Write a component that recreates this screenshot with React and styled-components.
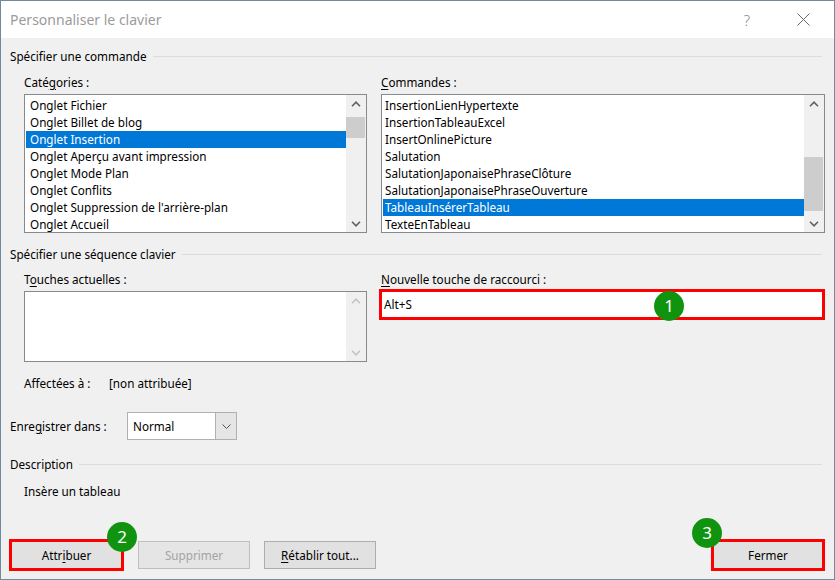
import React from 'react'
import styled, { createGlobalStyle } from 'styled-components'

const GlobalStyle = createGlobalStyle`
  html, body {
    margin: 0;
    padding: 0;
    background: #fff;
  }
  body {
    font-family: 'Noto Sans', 'Segoe UI', sans-serif;
    font-size: 11.7px;
    color: #000;
  }
`

const categories = [
  'Onglet Fichier',
  'Onglet Billet de blog',
  'Onglet Insertion',
  'Onglet Aperçu avant impression',
  'Onglet Mode Plan',
  'Onglet Conflits',
  "Onglet Suppression de l'arrière-plan",
  'Onglet Accueil',
]

const commands = [
  'InsertionLienHypertexte',
  'InsertionTableauExcel',
  'InsertOnlinePicture',
  'Salutation',
  'SalutationJaponaisePhraseClôture',
  'SalutationJaponaisePhraseOuverture',
  'TableauInsérerTableau',
  'TexteEnTableau',
]

const Chevron = ({ up, color }) => (
  <svg width='10' height='6' viewBox='0 0 10 6'>
    <path
      d={up ? 'M1 5.2 L5 1.2 L9 5.2' : 'M1 0.8 L5 4.8 L9 0.8'}
      fill='none'
      stroke={color}
      strokeWidth='1.6'
    />
  </svg>
)

const ListBox = ({ items, selected, thumb, height, indent }) => (
  <Box $height={height}>
    <Items>
      {items.map((item) => (
        <Item key={item} $selected={item === selected} $indent={indent}>
          {item}
        </Item>
      ))}
    </Items>
    <ScrollBar>
      <ScrollArrow>
        <Chevron up color={thumb ? '#606060' : '#c4c4c4'} />
      </ScrollArrow>
      <Track>{thumb && <Thumb $top={thumb.top} $height={thumb.height} />}</Track>
      <ScrollArrow>
        <Chevron color={thumb ? '#606060' : '#c4c4c4'} />
      </ScrollArrow>
    </ScrollBar>
  </Box>
)

const App = () => {
  return (
    <>
      <GlobalStyle />
      <Dialog>
        <TitleBar>
          <Title>Personnaliser le clavier</Title>
          <HelpButton>?</HelpButton>
          <CloseButton>
            <svg width='13' height='13' viewBox='0 0 13 13'>
              <path d='M0.5 0.5 L12.5 12.5 M12.5 0.5 L0.5 12.5' stroke='#6a6a6a' strokeWidth='1' />
            </svg>
          </CloseButton>
        </TitleBar>

        <Body>
          <SectionHeader>Spécifier une commande</SectionHeader>
          <Columns $top={10}>
            <Field>
              <Label>
                Caté<u>g</u>ories :
              </Label>
              <ListBox items={categories} selected='Onglet Insertion' thumb={{ top: 5, height: 21 }} />
            </Field>
            <Field>
              <Label>
                <u>C</u>ommandes :
              </Label>
              <ListBox
                items={commands}
                selected='TableauInsérerTableau'
                thumb={{ top: 45, height: 54 }}
                indent={2}
              />
            </Field>
          </Columns>

          <SectionHeader $top={13}>Spécifier une séquence clavier</SectionHeader>
          <Columns $top={9}>
            <Field>
              <Label>
                T<u>o</u>uches actuelles :
              </Label>
              <ListBox items={[]} height={71} />
            </Field>
            <Field>
              <Label>
                <u>N</u>ouvelle touche de raccourci :
              </Label>
              <KeyInput>
                Alt+S
                <Badge $left={272} $top={-1}>1</Badge>
              </KeyInput>
            </Field>
          </Columns>

          <AssignedRow>
            <AssignedLabel>Affectées à :</AssignedLabel>
            <span>[non attribuée]</span>
          </AssignedRow>

          <SaveRow>
            <SaveLabel>
              Enre<u>g</u>istrer dans :
            </SaveLabel>
            <Select>
              <SelectValue>Normal</SelectValue>
              <SelectButton>
                <svg width='9' height='5' viewBox='0 0 9 5'>
                  <path d='M0.5 0.5 L4.5 4.5 L8.5 0.5' fill='none' stroke='#555' strokeWidth='1' />
                </svg>
              </SelectButton>
            </Select>
          </SaveRow>

          <SectionHeader $top={16}>Description</SectionHeader>
          <DescriptionText>Insère un tableau</DescriptionText>

          <ButtonRow>
            <ButtonGroup>
              <Button $marked $width={115}>
                Attr<u>i</u>buer
                <Badge $left={95} $top={-20}>2</Badge>
              </Button>
              <Button disabled>Supprimer</Button>
              <Button>
                <u>R</u>établir tout...
              </Button>
            </ButtonGroup>
            <Button $marked $width={114}>
              Fermer
              <Badge $left={-22} $top={-24}>3</Badge>
            </Button>
          </ButtonRow>
        </Body>
      </Dialog>
    </>
  )
}

const Dialog = styled.div`
  width: 835px;
  height: 580px;
  box-sizing: border-box;
  border: 1px solid #6f8aa1;
  background: #f0f0f0;
  display: flex;
  flex-direction: column;
  overflow: hidden;
`

const TitleBar = styled.div`
  height: 37px;
  background: #fff;
  display: flex;
  align-items: center;
  padding: 0 8px 0 9px;
  flex-shrink: 0;
`

const Title = styled.div`
  flex: 1;
  font-size: 14px;
  color: #9b9b9b;
  padding-bottom: 1px;
`

const HelpButton = styled.div`
  width: 46px;
  margin-right: 10px;
  text-align: center;
  font-size: 15px;
  font-weight: 300;
  color: #8a8a8a;
`

const CloseButton = styled.div`
  width: 46px;
  display: flex;
  justify-content: center;
  align-items: center;
`

const Body = styled.div`
  flex: 1;
  display: flex;
  flex-direction: column;
  padding: 10px 9px 8px 9px;
`

const SectionHeader = styled.div`
  display: flex;
  align-items: center;
  height: 16px;
  line-height: 16px;
  margin-top: ${(p) => p.$top || 0}px;
  white-space: nowrap;
  &::after {
    content: '';
    flex: 1;
    height: 1px;
    background: #dcdcdc;
    margin-left: 6px;
    margin-right: 3px;
  }
`

const Columns = styled.div`
  display: grid;
  grid-template-columns: 343px 444px;
  column-gap: 14px;
  padding-left: 14px;
  margin-top: ${(p) => p.$top}px;
`

const Field = styled.div`
  display: flex;
  flex-direction: column;
`

const Label = styled.div`
  line-height: 16px;
  margin-bottom: 4px;
  white-space: nowrap;
  u {
    text-underline-offset: 2px;
  }
`

const Box = styled.div`
  height: ${(p) => p.$height || 139}px;
  box-sizing: border-box;
  border: 1px solid #858990;
  background: #fff;
  display: flex;
`

const Items = styled.div`
  flex: 1;
  padding: 2px 0 0 1px;
  overflow: hidden;
`

const Item = styled.div`
  height: 17px;
  line-height: 17px;
  padding-left: ${(p) => p.$indent ?? 4}px;
  white-space: nowrap;
  background: ${(p) => (p.$selected ? '#0078d7' : 'transparent')};
  color: ${(p) => (p.$selected ? '#fff' : '#000')};
`

const ScrollBar = styled.div`
  width: 20px;
  display: flex;
  flex-direction: column;
  background: #f0f0f0;
`

const ScrollArrow = styled.div`
  height: 17px;
  display: flex;
  align-items: center;
  justify-content: center;
  flex-shrink: 0;
`

const Track = styled.div`
  flex: 1;
  display: flex;
  flex-direction: column;
`

const Thumb = styled.div`
  margin-top: ${(p) => p.$top}px;
  height: ${(p) => p.$height}px;
  margin-right: 1px;
  background: #cdcdcd;
`

const KeyInput = styled.div`
  position: relative;
  margin: -2px 0 0 -2px;
  height: 31px;
  box-sizing: border-box;
  border: 3px solid #ff0000;
  background: #fff;
  padding-left: 2px;
  line-height: 24px;
`

const Badge = styled.span`
  position: absolute;
  left: ${(p) => p.$left}px;
  top: ${(p) => p.$top}px;
  width: 30px;
  height: 30px;
  border-radius: 50%;
  background: #109410;
  color: #fff;
  font-size: 17px;
  line-height: 30px;
  text-align: center;
  text-decoration: none;
`

const AssignedRow = styled.div`
  display: flex;
  padding-left: 14px;
  margin-top: 13px;
  line-height: 16px;
`

const AssignedLabel = styled.span`
  width: 85px;
`

const SaveRow = styled.div`
  display: flex;
  align-items: center;
  margin-top: 21px;
`

const SaveLabel = styled.span`
  width: 117px;
  u {
    text-underline-offset: 2px;
  }
`

const Select = styled.div`
  width: 110px;
  height: 28px;
  box-sizing: border-box;
  border: 1px solid #b0b0b0;
  background: #fff;
  display: flex;
`

const SelectValue = styled.div`
  flex: 1;
  padding-left: 5px;
  line-height: 26px;
`

const SelectButton = styled.div`
  width: 20px;
  background: #e5e5e5;
  border-left: 1px solid #b0b0b0;
  display: flex;
  align-items: center;
  justify-content: center;
`

const DescriptionText = styled.div`
  padding-left: 14px;
  margin-top: 11px;
  line-height: 16px;
`

const ButtonRow = styled.div`
  margin-top: auto;
  margin-left: -1px;
  display: flex;
  align-items: center;
  justify-content: space-between;
  height: 32px;
`

const ButtonGroup = styled.div`
  display: flex;
  align-items: center;
  gap: 14px;
`

const Button = styled.button`
  position: relative;
  width: ${(p) => p.$width || 112}px;
  height: ${(p) => (p.$marked ? 32 : 28)}px;
  box-sizing: border-box;
  border: ${(p) => (p.$marked ? '3px solid #ff0000' : '1px solid #adadad')};
  background: #e1e1e1;
  font-family: inherit;
  font-size: 11.7px;
  color: #000;
  padding: 0;
  &:disabled {
    border-color: #bfbfbf;
    color: #a3a3a3;
    background: #e5e5e5;
  }
  u {
    text-underline-offset: 2px;
  }
`

export default App
